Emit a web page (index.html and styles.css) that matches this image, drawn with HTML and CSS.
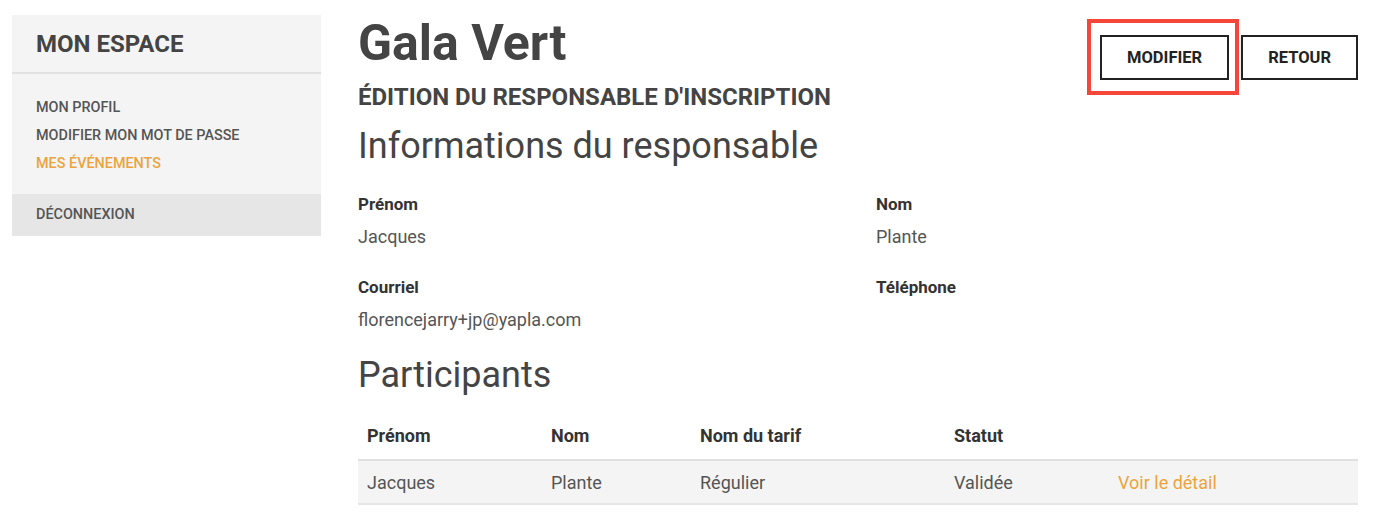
FILE: index.html
```html
<!DOCTYPE html>
<html lang="fr">
<head>
  <meta charset="UTF-8" />
  <title>Mon espace - Gala Vert</title>
  <link rel="stylesheet" href="styles.css">
</head>
<body>
  <div class="page">
    <aside class="sidebar">
      <h2 class="side-title">MON ESPACE</h2>
      <ul class="side-menu">
        <li><a href="#">MON PROFIL</a></li>
        <li><a href="#">MODIFIER MON MOT DE PASSE</a></li>
        <li><a href="#" class="active">MES ÉVÉNEMENTS</a></li>
      </ul>
      <a href="#" class="logout">DÉCONNEXION</a>
    </aside>

    <main class="content">
      <div class="head-row">
        <div>
          <h1>Gala Vert</h1>
          <h3 class="subtitle">ÉDITION DU RESPONSABLE D'INSCRIPTION</h3>
        </div>
        <div class="actions">
          <span class="highlight"><button class="btn">MODIFIER</button></span>
          <button class="btn">RETOUR</button>
        </div>
      </div>

      <h2 class="section">Informations du responsable</h2>
      <div class="fields">
        <div class="field">
          <div class="label">Prénom</div>
          <div class="value">Jacques</div>
        </div>
        <div class="field">
          <div class="label">Nom</div>
          <div class="value">Plante</div>
        </div>
        <div class="field">
          <div class="label">Courriel</div>
          <div class="value">florencejarry+jp@yapla.com</div>
        </div>
        <div class="field">
          <div class="label">Téléphone</div>
          <div class="value"></div>
        </div>
      </div>

      <h2 class="section participants-title">Participants</h2>
      <table class="participants">
        <thead>
          <tr>
            <th class="c1">Prénom</th>
            <th class="c2">Nom</th>
            <th class="c3">Nom du tarif</th>
            <th class="c4">Statut</th>
            <th></th>
          </tr>
        </thead>
        <tbody>
          <tr>
            <td>Jacques</td>
            <td>Plante</td>
            <td>Régulier</td>
            <td>Validée</td>
            <td><a href="#">Voir le détail</a></td>
          </tr>
        </tbody>
      </table>
    </main>
  </div>
</body>
</html>
```

FILE: styles.css
```css
body {
  margin: 0;
  font-family: Roboto, "Liberation Sans", Arial, sans-serif;
  color: #444;
  background: #fff;
}
a {
  text-decoration: none;
}
.page {
  display: flex;
  align-items: flex-start;
  gap: 37px;
  padding: 15px 22px 0 12px;
}

/* sidebar */
.sidebar {
  width: 309px;
  flex-shrink: 0;
  background-color: #f4f4f4;
}
.side-title {
  margin: 0;
  padding: 15px 24px 14px;
  font-size: 24px;
  font-weight: 700;
  line-height: 28px;
  color: #444;
  border-bottom: 2px solid #e2e2e2;
}
.side-menu {
  list-style: none;
  margin: 0;
  padding: 20px 24px 16px;
}
.side-menu a {
  display: block;
  line-height: 28px;
}
.side-menu a,
.logout {
  font-size: 14.4px;
  font-weight: 500;
  color: #555;
}
.side-menu a.active {
  color: #eba43d;
}
.logout {
  display: block;
  padding: 12px 24px;
  line-height: 18px;
  background-color: #e6e6e6;
}

/* contenu */
.content {
  flex: 1;
}
.head-row {
  display: flex;
  justify-content: space-between;
  align-items: flex-start;
}
h1 {
  margin: 0;
  font-size: 50px;
  font-weight: 700;
  line-height: 56px;
  color: #444;
}
.subtitle {
  margin: 12px 0 0;
  font-size: 24px;
  font-weight: 700;
  line-height: 28px;
  color: #444;
}
.actions {
  display: flex;
  gap: 12px;
  margin-top: 20px;
}
.btn {
  height: 45px;
  padding: 0 25px;
  font-family: inherit;
  font-size: 16.5px;
  font-weight: 700;
  color: #222;
  background: #fff;
  border: 2px solid #222;
  cursor: pointer;
}
.highlight {
  position: relative;
  display: flex;
}
.highlight::after {
  content: "";
  position: absolute;
  left: -13px;
  right: -10px;
  top: -16px;
  bottom: -15px;
  border: 4px solid #f4473a;
  pointer-events: none;
}
.section {
  margin: 13px 0 26px;
  font-size: 36px;
  font-weight: 400;
  line-height: 44px;
  color: #444;
}
.fields {
  display: grid;
  grid-template-columns: 518px 1fr;
  row-gap: 29px;
}
.label {
  font-size: 17px;
  font-weight: 700;
  line-height: 20px;
  color: #333;
}
.value {
  margin-top: 12px;
  font-size: 18px;
  line-height: 22px;
  color: #555;
  min-height: 22px;
}
.participants-title {
  margin-top: 22px;
  margin-bottom: 28px;
}
.participants {
  width: 100%;
  border-collapse: collapse;
  font-size: 18px;
}
.participants th {
  text-align: left;
  font-size: 18px;
  font-weight: 700;
  line-height: 22px;
  color: #333;
  padding: 0 9px 12px;
}
.participants td {
  padding: 0 9px;
  height: 42px;
  color: #555;
  background-color: #f4f4f4;
  border-top: 2px solid #e0e0e0;
  border-bottom: 2px solid #e6e6e6;
}
.participants .c1 { width: 166px; }
.participants .c2 { width: 131px; }
.participants .c3 { width: 236px; }
.participants .c4 { width: 146px; }
.participants td a {
  color: #eba43d;
}
```
